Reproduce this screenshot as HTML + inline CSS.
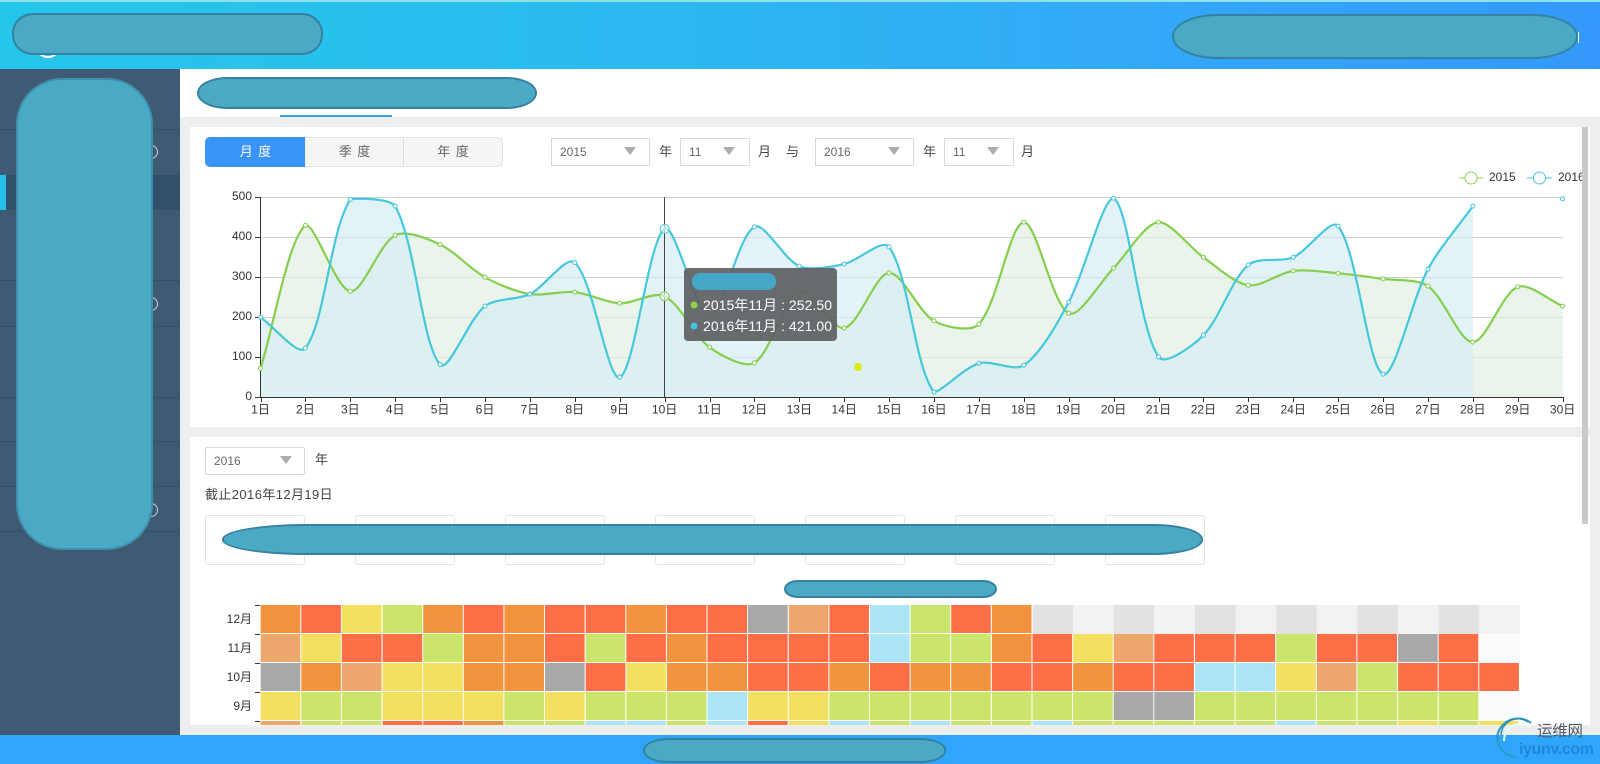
<!DOCTYPE html>
<html lang="zh-CN">
<head>
<meta charset="utf-8">
<title>月度</title>
<style>
html,body{margin:0;padding:0;width:1600px;height:764px;overflow:hidden;background:#eee}
body{position:relative;font-family:"Liberation Sans","Noto Sans CJK SC",sans-serif;color:#444}
.a{position:absolute;box-sizing:border-box}
.blob{position:absolute;box-sizing:border-box;background:#4aaac5;border:2px solid #37809f}
.sel{position:absolute;box-sizing:border-box;height:28px;border:1px solid #d9d9d9;background:#fff;font-size:12px;line-height:27px;color:#666;padding-left:8px}
.sel i{position:absolute;top:8px;border-left:6px solid transparent;border-right:6px solid transparent;border-top:8px solid #adadad}
.lb{position:absolute;font-size:13px;line-height:16px;color:#444;white-space:nowrap}
.sep{position:absolute;left:0;width:180px;height:1px;background:#36506a}
.box{position:absolute;box-sizing:border-box;top:515px;width:100px;height:50px;border:1px solid #e4e4e4;border-radius:3px;background:#fff}
.seg{position:absolute;top:137px;height:30px;box-sizing:border-box;text-align:center;font-size:13px;line-height:30px;letter-spacing:1px;color:#666}
svg text{font-family:"Liberation Sans","Noto Sans CJK SC",sans-serif}
</style>
</head>
<body>
<!-- header -->
<div class="a" style="left:0;top:0;width:1600px;height:69px;background:linear-gradient(90deg,#25c6eb 0%,#2bbcef 35%,#33a6f8 75%,#3399fc 100%)"></div>
<div class="a" style="left:0;top:0;width:1600px;height:2px;background:#8fe3e6"></div>
<div class="a" style="left:36px;top:37px;width:24px;height:21px;border-radius:50%;border:2px solid #fff"></div>
<div class="blob" style="left:12px;top:13px;width:311px;height:42px;border-radius:21px / 20px"></div>
<div class="blob" style="left:1172px;top:14px;width:406px;height:45px;border-radius:46px / 22px"></div>
<div class="a" style="left:1578px;top:32px;width:1px;height:11px;background:#fff"></div>

<!-- sidebar -->
<div class="a" style="left:0;top:69px;width:180px;height:666px;background:#3f5b74"></div>
<div class="a" style="left:0;top:175px;width:180px;height:35px;background:#33506b"></div>
<div class="a" style="left:0;top:175px;width:6px;height:35px;background:#25c0ee"></div>
<div class="sep" style="top:129px"></div>
<div class="sep" style="top:280px"></div>
<div class="sep" style="top:326px"></div>
<div class="sep" style="top:397px"></div>
<div class="sep" style="top:441px"></div>
<div class="sep" style="top:486px"></div>
<div class="sep" style="top:531px"></div>
<div class="a" style="left:144px;top:145px;width:14px;height:14px;border:1px solid #c3ced8;border-radius:50%"></div>
<div class="a" style="left:144px;top:297px;width:14px;height:14px;border:1px solid #c3ced8;border-radius:50%"></div>
<div class="a" style="left:144px;top:503px;width:14px;height:14px;border:1px solid #c3ced8;border-radius:50%"></div>
<div class="blob" style="left:16px;top:78px;width:137px;height:472px;border-radius:46px;background:#4aaac5;border-color:#3f8fab"></div>

<!-- tab bar -->
<div class="a" style="left:180px;top:69px;width:1420px;height:48px;background:#fff"></div>
<div class="a" style="left:280px;top:115px;width:112px;height:2px;background:#2fa5d8"></div>
<div class="blob" style="left:197px;top:77px;width:340px;height:32px;border-radius:30px / 16px"></div>

<!-- panels -->
<div class="a" style="left:190px;top:127px;width:1400px;height:300px;background:#fff"></div>
<div class="a" style="left:190px;top:437px;width:1400px;height:288px;background:#fff"></div>

<!-- segmented control -->
<div class="a" style="left:205px;top:137px;width:298px;height:30px;background:#f5f5f5;border:1px solid #e4e4e4;border-radius:5px"></div>
<div class="seg" style="left:205px;width:100px;background:#3a93f7;color:#fff;border-radius:5px 0 0 5px;padding-left:2px">月 度</div>
<div class="seg" style="left:305px;width:99px;border-right:1px solid #ddd;padding-left:2px">季 度</div>
<div class="seg" style="left:404px;width:99px">年 度</div>

<!-- selects row -->
<div class="sel" style="left:551px;top:138px;width:99px">2015<i style="left:72px"></i></div>
<div class="lb" style="left:659px;top:144px">年</div>
<div class="sel" style="left:680px;top:138px;width:70px">11<i style="left:42px"></i></div>
<div class="lb" style="left:758px;top:144px">月</div>
<div class="lb" style="left:786px;top:144px">与</div>
<div class="sel" style="left:815px;top:138px;width:99px">2016<i style="left:72px"></i></div>
<div class="lb" style="left:923px;top:144px">年</div>
<div class="sel" style="left:944px;top:138px;width:70px">11<i style="left:42px"></i></div>
<div class="lb" style="left:1021px;top:144px">月</div>

<!-- chart -->
<svg class="a" style="left:0;top:0" width="1600" height="764" viewBox="0 0 1600 764">
  <defs>
    <clipPath id="hm"><rect x="250" y="600" width="1290" height="125"/></clipPath>
    <clipPath id="lg"><rect x="1440" y="160" width="142" height="35"/></clipPath>
  </defs>
  <g stroke="#cdcdcd" stroke-width="1">
    <line x1="260" y1="197.5" x2="1563" y2="197.5"/>
    <line x1="260" y1="237.5" x2="1563" y2="237.5"/>
    <line x1="260" y1="277.5" x2="1563" y2="277.5"/>
    <line x1="260" y1="317.5" x2="1563" y2="317.5"/>
    <line x1="260" y1="357.5" x2="1563" y2="357.5"/>
  </g>
  <g id="areas"></g>
  <g stroke="#333" stroke-width="1">
    <line x1="260.5" y1="197" x2="260.5" y2="398"/>
    <line x1="260" y1="397.5" x2="1563" y2="397.5"/>
    <line x1="255" y1="197.5" x2="260" y2="197.5"/>
    <line x1="255" y1="237.5" x2="260" y2="237.5"/>
    <line x1="255" y1="277.5" x2="260" y2="277.5"/>
    <line x1="255" y1="317.5" x2="260" y2="317.5"/>
    <line x1="255" y1="357.5" x2="260" y2="357.5"/>
    <line x1="255" y1="397.5" x2="260" y2="397.5"/>
    <line x1="664.5" y1="197" x2="664.5" y2="397" stroke="#444"/>
  </g>
  <g id="ticks" stroke="#333" stroke-width="1"></g>
  <g font-size="12" fill="#333" text-anchor="end">
    <text x="252" y="200">500</text>
    <text x="252" y="240">400</text>
    <text x="252" y="280">300</text>
    <text x="252" y="320">200</text>
    <text x="252" y="360">100</text>
    <text x="252" y="400">0</text>
  </g>
  <g font-size="12" fill="#333" text-anchor="middle">
    <text x="260.5" y="413.5">1日</text><text x="305.4" y="413.5">2日</text><text x="350.3" y="413.5">3日</text>
    <text x="395.2" y="413.5">4日</text><text x="440.1" y="413.5">5日</text><text x="485" y="413.5">6日</text>
    <text x="529.9" y="413.5">7日</text><text x="574.8" y="413.5">8日</text><text x="619.7" y="413.5">9日</text>
    <text x="664.6" y="413.5">10日</text><text x="709.5" y="413.5">11日</text><text x="754.4" y="413.5">12日</text>
    <text x="799.3" y="413.5">13日</text><text x="844.2" y="413.5">14日</text><text x="889.1" y="413.5">15日</text>
    <text x="934" y="413.5">16日</text><text x="978.9" y="413.5">17日</text><text x="1023.8" y="413.5">18日</text>
    <text x="1068.7" y="413.5">19日</text><text x="1113.6" y="413.5">20日</text><text x="1158.5" y="413.5">21日</text>
    <text x="1203.4" y="413.5">22日</text><text x="1248.3" y="413.5">23日</text><text x="1293.2" y="413.5">24日</text>
    <text x="1338.1" y="413.5">25日</text><text x="1383" y="413.5">26日</text><text x="1427.9" y="413.5">27日</text>
    <text x="1472.8" y="413.5">28日</text><text x="1517.7" y="413.5">29日</text><text x="1562.6" y="413.5">30日</text>
  </g>
  <g id="lines"></g>
  <!-- legend -->
  <g clip-path="url(#lg)" fill="none" stroke-width="1">
    <line x1="1459" y1="178" x2="1483" y2="178" stroke="#8dd253"/>
    <circle cx="1471" cy="178" r="6" fill="#fff" stroke="#8dd253"/>
    <line x1="1527" y1="178" x2="1552" y2="178" stroke="#48c8de"/>
    <circle cx="1539.5" cy="178" r="6" fill="#fff" stroke="#48c8de"/>
    <text x="1489" y="181" font-size="12" fill="#333" stroke="none">2015</text>
    <text x="1558" y="181" font-size="12" fill="#333" stroke="none">2016</text>
  </g>
  <!-- yellow dot -->
  <circle cx="858" cy="367" r="4" fill="#dcea1a"/>
  <!-- tooltip -->
  <rect x="684" y="268" width="153" height="73" rx="4" fill="#5f6163" fill-opacity=".93"/>
  <rect x="692" y="273" width="84" height="17" rx="8" fill="#45a7c6"/>
  <circle cx="694" cy="305" r="3.5" fill="#8fd14a"/>
  <circle cx="694" cy="326" r="3.5" fill="#3fc4e0"/>
  <text x="703" y="310" font-size="14" fill="#fff" textLength="129" lengthAdjust="spacing">2015年11月 : 252.50</text>
  <text x="703" y="331" font-size="14" fill="#fff" textLength="129" lengthAdjust="spacing">2016年11月 : 421.00</text>
  <!-- heatmap -->
  <g id="heat" clip-path="url(#hm)"></g>
  <g stroke="#333" stroke-width="1">
    <line x1="255" y1="605.5" x2="260" y2="605.5"/>
    <line x1="255" y1="634.5" x2="260" y2="634.5"/>
    <line x1="255" y1="663.5" x2="260" y2="663.5"/>
    <line x1="255" y1="692.5" x2="260" y2="692.5"/>
    <line x1="255" y1="721.5" x2="260" y2="721.5"/>
  </g>
  <g font-size="12" fill="#333" text-anchor="end">
    <text x="252" y="623">12月</text>
    <text x="252" y="652">11月</text>
    <text x="252" y="681">10月</text>
    <text x="252" y="710">9月</text>
  </g>
</svg>

<!-- scrollbar -->
<div class="a" style="left:1582px;top:127px;width:6px;height:397px;background:#c9c9c9"></div>

<!-- second panel controls -->
<div class="sel" style="left:205px;top:447px;width:100px;border-radius:2px">2016<i style="left:74px"></i></div>
<div class="lb" style="left:315px;top:452px">年</div>
<div class="lb" style="left:205px;top:487px;letter-spacing:.4px">截止2016年12月19日</div>
<div class="box" style="left:205px"></div>
<div class="box" style="left:355px"></div>
<div class="box" style="left:505px"></div>
<div class="box" style="left:655px"></div>
<div class="box" style="left:805px"></div>
<div class="box" style="left:955px"></div>
<div class="box" style="left:1105px"></div>
<div class="blob" style="left:222px;top:524px;width:981px;height:31px;border-radius:85px 50px 50px 85px / 15px"></div>
<div class="blob" style="left:784px;top:580px;width:213px;height:18px;border-radius:14px / 9px"></div>

<!-- footer -->
<div class="a" style="left:0;top:735px;width:1600px;height:29px;background:#2fa6fb"></div>
<div class="blob" style="left:643px;top:738px;width:303px;height:25px;border-radius:26px / 12px"></div>

<!-- watermark -->
<svg class="a" style="left:1480px;top:704px" width="120" height="60" viewBox="1480 704 120 60">
  <path d="M1531 723 A21 21 0 0 0 1497 738 A21 21 0 0 0 1517 757" fill="none" stroke="#2a9cc0" stroke-width="2"/>
  <path d="M1531 727 A17 17 0 0 0 1504 741" fill="none" stroke="#e8fafc" stroke-width="2"/>
  <path d="M1528 722 A17 17 0 0 0 1501 735" fill="none" stroke="#2a8fb0" stroke-width="1.5"/>
  <text x="1537" y="736" font-size="15.5" fill="#505a64" textLength="46">运维网</text>
  <text x="1519" y="754" font-size="16" font-weight="bold" fill="#1f86d6" textLength="75">iyunv.com</text>
</svg>

<script>
(function(){
var NS='http://www.w3.org/2000/svg';
function el(n,a,p){var e=document.createElementNS(NS,n);for(var k in a)e.setAttribute(k,a[k]);p.appendChild(e);return e}
var X=function(i){return 260.5+44.9*i},Y=function(v){return 397.3-v*0.4};
var g15=[72,430,265,405,382,300,258,263,235,252.5,125,86,265,173,311,191,183,438,210,323,438,350,280,316,310,296,278,138,276,228];
var g16=[200,123,495,478,82,228,258,337,50,421,205,426,328,333,376,13,85,80,238,498,101,155,331,350,428,58,320,478];
function path(v){
  var p=v.map(function(d,i){return[X(i),Y(d)]}),n=p.length,s=0.3,cb=[],ca=[];
  var minY=Math.min.apply(null,p.map(function(q){return q[1]})),maxY=Math.max.apply(null,p.map(function(q){return q[1]}));
  function cl(y){return Math.max(minY,Math.min(maxY,y))}
  for(var i=0;i<n;i++){
    var a=p[Math.max(i-1,0)],b=p[i],c=p[Math.min(i+1,n-1)];
    var d0=Math.hypot(b[0]-a[0],b[1]-a[1]),d1=Math.hypot(c[0]-b[0],c[1]-b[1]),t=d0+d1||1;
    var vx=(c[0]-a[0])*s,vy=(c[1]-a[1])*s;
    cb[i]=[b[0]-vx*d0/t,cl(b[1]-vy*d0/t)];
    ca[i]=[b[0]+vx*d1/t,cl(b[1]+vy*d1/t)];
  }
  var d='M'+p[0][0]+' '+p[0][1];
  for(var j=0;j<n-1;j++){d+='C'+ca[j][0].toFixed(1)+' '+ca[j][1].toFixed(1)+' '+cb[j+1][0].toFixed(1)+' '+cb[j+1][1].toFixed(1)+' '+p[j+1][0].toFixed(1)+' '+p[j+1][1].toFixed(1)}
  return{d:d,p:p};
}
var areas=document.getElementById('areas'),lines=document.getElementById('lines'),ticks=document.getElementById('ticks');
for(var t=0;t<30;t++){el('line',{x1:Math.round(X(t))+.5,y1:397,x2:Math.round(X(t))+.5,y2:402},ticks)}
[[g15,'#86cf4e','rgba(225,240,226,.7)'],[g16,'#46c8dc','rgba(214,236,243,.68)']].forEach(function(sr){
  var r=path(sr[0]),last=r.p[r.p.length-1];
  el('path',{d:r.d+'L'+last[0]+' 397.3L260.5 397.3Z',fill:sr[2]},areas);
  el('path',{d:r.d,fill:'none',stroke:sr[1],'stroke-width':2.2},lines);
  r.p.forEach(function(q,i){
    var hv=i===9;
    el('circle',{cx:q[0],cy:q[1],r:hv?4.5:2,fill:'#fff','fill-opacity':hv?.6:1,stroke:sr[1],'stroke-width':1},lines);
  });
});
el('circle',{cx:X(29),cy:Y(496),r:2,fill:'#fff',stroke:'#46c8dc','stroke-width':1},lines);

var C={o:'#f2933f',r:'#ff6f47',y:'#f3e061',g:'#cbe46c',p:'#eda66c',k:'#a8a8a8',b:'#ace6f6',d:'#e2e2e2',l:'#f2f2f2',w:'#fbfbfb'};
var rows=[
'orygororrorrkprbgrodldldldldldl',
'pyrrgoorgrorrrrbggoryprrrgrrkrw',
'kopyyookryoorrorooorrorrbbypgrrr'.slice(0,10)+'oorrorooRR'.toLowerCase()+'orrbbypgrrr',
'yggyyygyggg'+'byy'+'ggggggg'+'kk'+'ggggggg'+'w',
'pggrroggbbgbrybgbggbgggggbggygy'
];
var heat=document.getElementById('heat'),ys=[605,634,663,692,721];
rows.forEach(function(r,ri){
  for(var i=0;i<31;i++){
    var c=r.charAt(i);if(!c)continue;
    var soft=(c==='d'||c==='l'||c==='w');
    el('rect',{x:(260.7+i*40.62).toFixed(1),y:ys[ri],width:soft?40.7:39.6,height:soft?29:28,fill:C[c]},heat);
  }
});
})();
</script>
</body>
</html>
